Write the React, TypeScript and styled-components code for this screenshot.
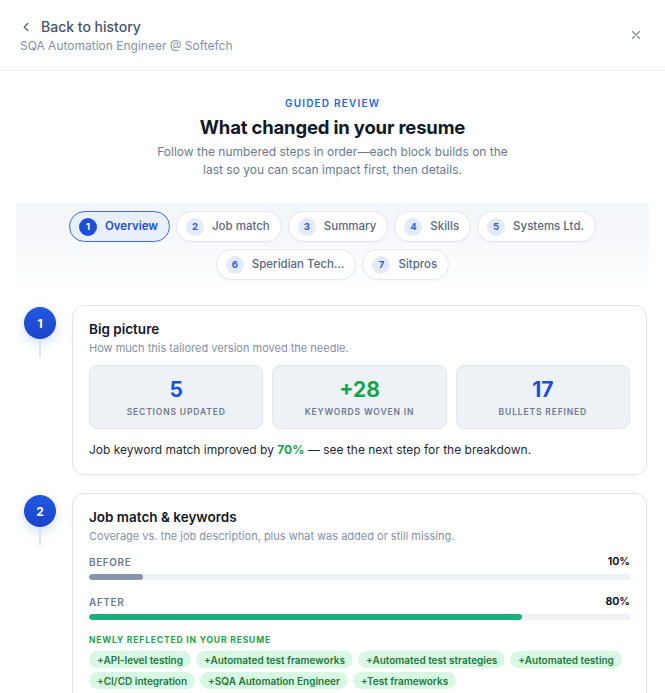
import React, { useState } from 'react';
import styled, { createGlobalStyle } from 'styled-components';

const GlobalStyle = createGlobalStyle`
  html, body {
    margin: 0;
    padding: 0;
    background: #ffffff;
  }
  body {
    font-family: Inter, "Noto Sans", "Liberation Sans", sans-serif;
    color: #0f172a;
    -webkit-font-smoothing: antialiased;
  }
  * { box-sizing: border-box; }
`;

const steps = [
  'Overview',
  'Job match',
  'Summary',
  'Skills',
  'Systems Ltd.',
  'Speridian Tech...',
  'Sitpros',
];

const stats = [
  { value: '5', label: 'Sections updated', tone: 'blue' },
  { value: '+28', label: 'Keywords woven in', tone: 'green' },
  { value: '17', label: 'Bullets refined', tone: 'blue' },
];

const keywords = [
  'API-level testing',
  'Automated test frameworks',
  'Automated test strategies',
  'Automated testing',
  'CI/CD integration',
  'SQA Automation Engineer',
  'Test frameworks',
];

const App = () => {
  const [active, setActive] = useState(0);

  return (
    <>
      <GlobalStyle />
      <Panel>
        <Header>
          <div>
            <BackLink>
              <svg width="14" height="14" viewBox="0 0 24 24" fill="none" stroke="currentColor" strokeWidth="2.6" strokeLinecap="round" strokeLinejoin="round">
                <path d="M15 18l-6-6 6-6" />
              </svg>
              Back to history
            </BackLink>
            <JobLine>SQA Automation Engineer @ Softefch</JobLine>
          </div>
          <CloseButton aria-label="Close">
            <svg width="14" height="14" viewBox="0 0 24 24" fill="none" stroke="currentColor" strokeWidth="2" strokeLinecap="round">
              <path d="M6 6l12 12M18 6L6 18" />
            </svg>
          </CloseButton>
        </Header>

        <Main>
          <Intro>
            <Eyebrow>Guided review</Eyebrow>
            <Title>What changed in your resume</Title>
            <Lead>
              Follow the numbered steps in order—each block builds on the last so you can scan impact first, then details.
            </Lead>
          </Intro>

          <StepNav>
            {steps.map((s, i) => (
              <Pill key={s} $active={active === i} onClick={() => setActive(i)}>
                <PillNum $active={active === i}>{i + 1}</PillNum>
                {s}
              </Pill>
            ))}
          </StepNav>

          <Timeline>
            <StepRow>
              <Rail>
                <StepDot>1</StepDot>
                <RailLine />
              </Rail>
              <Card>
                <CardTitle>Big picture</CardTitle>
                <CardSub>How much this tailored version moved the needle.</CardSub>
                <StatGrid>
                  {stats.map((st) => (
                    <StatBox key={st.label}>
                      <StatValue $tone={st.tone}>{st.value}</StatValue>
                      <StatLabel>{st.label}</StatLabel>
                    </StatBox>
                  ))}
                </StatGrid>
                <Summary>
                  Job keyword match improved by <Good>70%</Good> — see the next step for the breakdown.
                </Summary>
              </Card>
            </StepRow>

            <StepRow>
              <Rail>
                <StepDot>2</StepDot>
                <RailLine />
              </Rail>
              <Card>
                <CardTitle>Job match &amp; keywords</CardTitle>
                <CardSub>Coverage vs. the job description, plus what was added or still missing.</CardSub>
                <Meter>
                  <MeterHead>
                    <MeterLabel>Before</MeterLabel>
                    <MeterValue>10%</MeterValue>
                  </MeterHead>
                  <Track>
                    <Fill $tone="gray" style={{ width: '10%' }} />
                  </Track>
                </Meter>
                <Meter>
                  <MeterHead>
                    <MeterLabel>After</MeterLabel>
                    <MeterValue>80%</MeterValue>
                  </MeterHead>
                  <Track>
                    <Fill $tone="green" style={{ width: '80%' }} />
                  </Track>
                </Meter>
                <ChipHeading>Newly reflected in your resume</ChipHeading>
                <Chips>
                  {keywords.map((k) => (
                    <Chip key={k}>+{k}</Chip>
                  ))}
                </Chips>
              </Card>
            </StepRow>
          </Timeline>
        </Main>
      </Panel>
    </>
  );
};

const Panel = styled.div`
  width: 665px;
  min-height: 693px;
  background: #fff;
  overflow: hidden;
`;

const Header = styled.header`
  height: 71px;
  display: flex;
  align-items: center;
  justify-content: space-between;
  padding: 1px 20px 1px 20px;
  border-bottom: 1px solid #e8ecf3;
`;

const BackLink = styled.button`
  display: flex;
  align-items: center;
  gap: 8px;
  border: none;
  background: none;
  padding: 0;
  margin-left: -1px;
  font: 500 14px/20px Inter, sans-serif;
  color: #475569;
  cursor: pointer;
  svg { color: #5b6b85; }
`;

const JobLine = styled.div`
  margin-top: 1px;
  font-size: 12px;
  line-height: 16px;
  color: #8391a7;
`;

const CloseButton = styled.button`
  border: none;
  background: none;
  padding: 4px;
  margin-right: -2px;
  color: #7d8ba3;
  display: flex;
  cursor: pointer;
`;

const Main = styled.main`
  padding: 0 16px 24px;
`;

const Intro = styled.section`
  text-align: center;
  padding-top: 25px;
`;

const Eyebrow = styled.div`
  font-size: 10px;
  line-height: 14px;
  font-weight: 600;
  letter-spacing: 0.12em;
  text-transform: uppercase;
  color: #2563eb;
`;

const Title = styled.h1`
  margin: 5px 0 0;
  font-size: 18.5px;
  line-height: 24px;
  font-weight: 700;
  color: #111827;
  letter-spacing: -0.01em;
`;

const Lead = styled.p`
  margin: 4px auto 0;
  max-width: 372px;
  font-size: 12px;
  line-height: 18px;
  color: #6b7a93;
`;

const StepNav = styled.nav`
  margin-top: 24px;
  padding: 8px 40px 10px;
  display: flex;
  flex-wrap: wrap;
  justify-content: center;
  gap: 7px 6px;
  background: linear-gradient(180deg, #f3f6fa 0%, #f8fafc 60%, #ffffff 100%);
`;

const Pill = styled.button<{ $active: boolean }>`
  display: inline-flex;
  align-items: center;
  gap: 8px;
  height: 31px;
  padding: 0 11px 0 9px;
  border-radius: 999px;
  border: 1px solid ${(p) => (p.$active ? '#3b6ee8' : '#e2e8f0')};
  background: ${(p) => (p.$active ? '#e9effc' : '#ffffff')};
  color: ${(p) => (p.$active ? '#1d4ed8' : '#5a6882')};
  font: ${(p) => (p.$active ? 600 : 500)} 11.5px/1 Inter, sans-serif;
  cursor: pointer;
  box-shadow: 0 1px 2px rgba(15, 23, 42, 0.03);
`;

const PillNum = styled.span<{ $active: boolean }>`
  width: 18px;
  height: 18px;
  border-radius: 50%;
  display: inline-flex;
  align-items: center;
  justify-content: center;
  font-size: 9.5px;
  font-weight: 700;
  background: ${(p) => (p.$active ? '#1d4ed8' : '#e3eafb')};
  color: ${(p) => (p.$active ? '#ffffff' : '#2f5fd8')};
`;

const Timeline = styled.div`
  margin-top: 15px;
  display: flex;
  flex-direction: column;
  gap: 18px;
  padding: 0 2px 0 8px;
`;

const StepRow = styled.div`
  display: flex;
  gap: 16px;
  align-items: flex-start;
`;

const Rail = styled.div`
  width: 32px;
  flex: none;
  display: flex;
  flex-direction: column;
  align-items: center;
  padding-top: 2px;
`;

const StepDot = styled.div`
  width: 32px;
  height: 32px;
  border-radius: 50%;
  background: linear-gradient(180deg, #2357e0 0%, #1b45c9 100%);
  color: #fff;
  font-size: 12px;
  font-weight: 700;
  display: flex;
  align-items: center;
  justify-content: center;
  box-shadow: 0 4px 12px rgba(37, 99, 235, 0.22);
`;

const RailLine = styled.div`
  width: 2px;
  height: 18px;
  background: #d9e1ee;
`;

const Card = styled.section`
  flex: 1;
  min-width: 0;
  border: 1px solid #dfe5ee;
  border-radius: 12px;
  background: #fff;
  padding: 14px 16px 16px;
  box-shadow: 0 1px 3px rgba(15, 23, 42, 0.04);
`;

const CardTitle = styled.h2`
  margin: 0;
  font-size: 13.5px;
  line-height: 18px;
  font-weight: 600;
  color: #111827;
`;

const CardSub = styled.p`
  margin: 3px 0 0;
  font-size: 11px;
  line-height: 14px;
  color: #8391a7;
`;

const StatGrid = styled.div`
  margin-top: 10px;
  display: grid;
  grid-template-columns: repeat(3, 1fr);
  gap: 9px;
`;

const StatBox = styled.div`
  height: 64px;
  border-radius: 8px;
  border: 1px solid #e0e6ef;
  background: #eef2f7;
  display: flex;
  flex-direction: column;
  align-items: center;
  justify-content: center;
  gap: 3px;
`;

const StatValue = styled.div<{ $tone: string }>`
  font-size: 21px;
  line-height: 26px;
  font-weight: 700;
  color: ${(p) => (p.$tone === 'green' ? '#16a34a' : '#1d4ed8')};
`;

const StatLabel = styled.div`
  font-size: 8.5px;
  line-height: 12px;
  font-weight: 600;
  letter-spacing: 0.1em;
  text-transform: uppercase;
  color: #6b7a93;
`;

const Summary = styled.p`
  margin: 13px 0 0;
  font-size: 12px;
  line-height: 16px;
  color: #1f2937;
`;

const Good = styled.strong`
  color: #16a34a;
  font-weight: 700;
`;

const Meter = styled.div`
  margin-top: 12px;
  & + & { margin-top: 15px; }
`;

const MeterHead = styled.div`
  display: flex;
  justify-content: space-between;
  align-items: center;
  margin-bottom: 6px;
`;

const MeterLabel = styled.span`
  font-size: 10px;
  font-weight: 600;
  letter-spacing: 0.06em;
  text-transform: uppercase;
  color: #6b7a93;
`;

const MeterValue = styled.span`
  font-size: 10.5px;
  font-weight: 700;
  color: #111827;
`;

const Track = styled.div`
  height: 6px;
  border-radius: 999px;
  background: #eef1f5;
  overflow: hidden;
`;

const Fill = styled.div<{ $tone: string }>`
  height: 100%;
  border-radius: 999px;
  background: ${(p) => (p.$tone === 'green' ? '#1bb07a' : '#8795ab')};
`;

const ChipHeading = styled.div`
  margin-top: 14px;
  font-size: 8.5px;
  line-height: 12px;
  font-weight: 700;
  letter-spacing: 0.1em;
  text-transform: uppercase;
  color: #16a34a;
`;

const Chips = styled.div`
  margin-top: 5px;
  display: flex;
  flex-wrap: wrap;
  gap: 4px 5px;
`;

const Chip = styled.span`
  display: inline-flex;
  align-items: center;
  height: 17px;
  padding: 0 8px;
  border-radius: 999px;
  background: #d9f8e3;
  color: #1a7a3c;
  font-size: 10px;
  font-weight: 600;
`;

export default App;
